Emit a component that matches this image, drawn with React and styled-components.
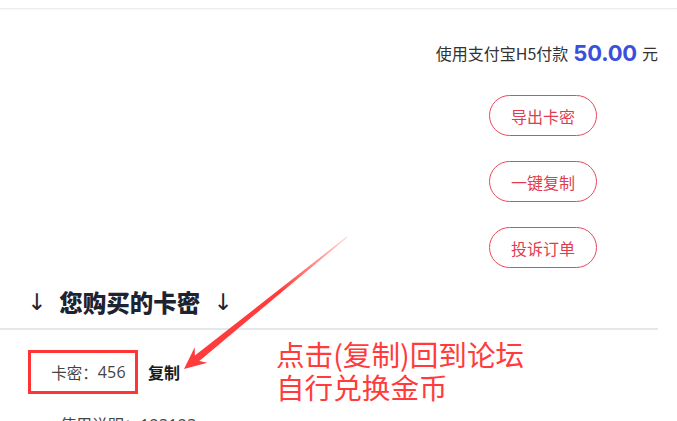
import React from "react";
import styled, { createGlobalStyle } from "styled-components";

const Global = createGlobalStyle`
  html, body { margin: 0; padding: 0; background: #fff; }
  body { font-family: "Noto Sans CJK SC", "Noto Sans", sans-serif; overflow: hidden; }
`;

const Page = styled.div`
  position: relative;
  width: 677px;
  height: 421px;
  overflow: hidden;
`;

const TopBar = styled.div`
  height: 8px;
  border-bottom: 1px solid #ededed;
  box-shadow: 0 1px 2px rgba(0, 0, 0, 0.04);
`;

const Content = styled.div`
  width: 658px;
`;

const PayRow = styled.div`
  margin-top: 32px;
  display: flex;
  justify-content: flex-end;
  align-items: center;
  gap: 5px;
  height: 24px;
  font-size: 16px;
  color: #333;
`;

const Amount = styled.span`
  font-family: Inter, "Noto Sans", sans-serif;
  font-weight: 700;
  font-size: 22px;
  color: #3a4fdc;
  letter-spacing: -0.2px;
`;

const ButtonCol = styled.div`
  margin-top: 30px;
  display: flex;
  flex-direction: column;
  align-items: flex-end;
  gap: 25px;
  padding-right: 61px;
`;

const PillButton = styled.button`
  box-sizing: border-box;
  width: 108px;
  height: 41px;
  border: 1px solid #e8485c;
  border-radius: 21px;
  background: #fff;
  color: #e23b50;
  font-family: "Noto Sans CJK SC", sans-serif;
  font-size: 16px;
  padding: 0;
  cursor: pointer;
`;

const Heading = styled.h2`
  margin: 19px 0 0 27px;
  font-size: 23.5px;
  line-height: 30px;
  font-weight: 900;
  color: #1d2330;
  display: flex;
  align-items: center;
  gap: 13px;
`;

const Arrow = styled.span`
  font-weight: 400;
  font-family: "DejaVu Sans", sans-serif;
  font-size: 23px;
`;

const Divider = styled.div`
  margin-top: 11px;
  height: 2px;
  background: #e4e8ed;
`;

const CardRow = styled.div`
  margin-top: 20px;
  padding-left: 28px;
  display: flex;
  align-items: center;
  gap: 10px;
`;

const HighlightBox = styled.div`
  box-sizing: border-box;
  width: 110px;
  height: 44px;
  border: 3px solid #ff3535;
  display: flex;
  align-items: center;
  justify-content: flex-end;
  padding-right: 9px;
  font-size: 15.5px;
  color: #444;
`;

const Digits = styled.span`
  font-family: "Open Sans", "Noto Sans", sans-serif;
  font-size: 16px;
  letter-spacing: 0.3px;
`;

const CopyLink = styled.span`
  font-size: 16px;
  font-weight: 700;
  color: #1a1a1a;
`;

const UsageRow = styled.div`
  margin-top: 18px;
  padding-left: 60px;
  font-size: 16px;
  line-height: 24px;
  color: #444;
`;

const Annotation = styled.div`
  position: absolute;
  left: 276px;
  top: 337px;
  color: #ff3b3b;
  white-space: nowrap;
`;

const AnnotationLine = styled.div`
  font-size: 28.6px;
  line-height: 33px;
  font-weight: 400;
`;

const Overlay = styled.svg`
  position: absolute;
  left: 0;
  top: 0;
  pointer-events: none;
`;

export default function App() {
  return (
    <>
      <Global />
      <Page>
        <TopBar />
        <Content>
          <PayRow>
            <span>使用支付宝H5付款</span>
            <Amount>50.00</Amount>
            <span>元</span>
          </PayRow>
          <ButtonCol>
            <PillButton>导出卡密</PillButton>
            <PillButton>一键复制</PillButton>
            <PillButton>投诉订单</PillButton>
          </ButtonCol>
          <Heading>
            <Arrow>↓</Arrow>
            <span>您购买的卡密</span>
            <Arrow>↓</Arrow>
          </Heading>
          <Divider />
          <CardRow>
            <HighlightBox>
              卡密：<Digits>456</Digits>
            </HighlightBox>
            <CopyLink>复制</CopyLink>
          </CardRow>
          <UsageRow>
            使用说明：<Digits>123123</Digits>
          </UsageRow>
        </Content>
        <Annotation>
          <AnnotationLine>点击(复制)回到论坛</AnnotationLine>
          <AnnotationLine>自行兑换金币</AnnotationLine>
        </Annotation>
        <Overlay width="677" height="421" viewBox="0 0 677 421">
          <defs>
            <linearGradient id="arrowGrad" gradientUnits="userSpaceOnUse" x1="347" y1="237" x2="280" y2="292">
              <stop offset="0" stopColor="#ff3b3b" stopOpacity="0.2" />
              <stop offset="1" stopColor="#ff3b3b" stopOpacity="1" />
            </linearGradient>
          </defs>
          <polygon
            fill="url(#arrowGrad)"
            points="184,369 207.4,362.7 199.3,360.9 347.3,237.4 346.7,236.6 194.9,355.5 194.7,347.3"
          />
        </Overlay>
      </Page>
    </>
  );
}
